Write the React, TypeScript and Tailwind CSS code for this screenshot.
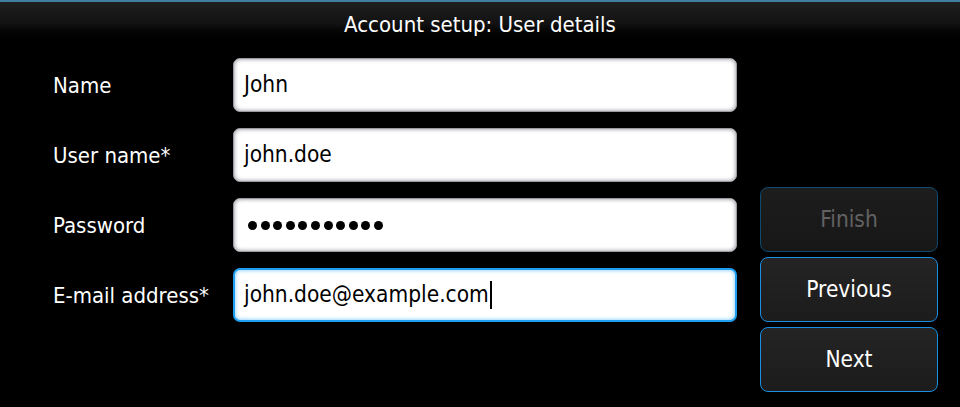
import React from "react";

const font = { fontFamily: '"DejaVu Sans Condensed", "DejaVu Sans", sans-serif' };

const fields = [
  { label: "Name", value: "John" },
  { label: "User name*", value: "john.doe" },
  { label: "Password", value: "", password: true },
  { label: "E-mail address*", value: "john.doe@example.com", focused: true },
];

const Field = ({ label, value, password, focused }: { label: string; value: string; password?: boolean; focused?: boolean }) => (
  <div className="flex items-center h-[54px]">
    <span className="w-[180px] text-white text-[22px]">{label}</span>
    <div
      className={
        focused
          ? "w-[504px] h-[54px] rounded-[7px] bg-white border-2 border-[#1e9ef0] shadow-[inset_0_0_4px_#6cc4ff] flex items-center pl-[9px]"
          : "w-[504px] h-[54px] rounded-[7px] bg-white border border-[#9c9aa0] shadow-[inset_0_0_4px_#8a8690] flex items-center pl-[10px]"
      }
    >
      {password ? (
        <div className="flex gap-[3.6px] pl-[4px]">
          {Array.from({ length: 11 }).map((_, i) => (
            <span key={i} className="w-[9px] h-[9px] rounded-full bg-black" />
          ))}
        </div>
      ) : (
        <>
          <span className="text-black text-[22.5px]">{value}</span>
          {focused && <span className="w-[2px] h-[28px] bg-black ml-[1px]" />}
        </>
      )}
    </div>
  </div>
);

const Button = ({ children, disabled }: { children: React.ReactNode; disabled?: boolean }) => (
  <button
    className={
      disabled
        ? "h-[65px] w-[178px] rounded-[8px] border border-[#0c4a73] bg-gradient-to-b from-[#1e1d1d] to-[#181717] text-[#626262] text-[22.5px]"
        : "h-[65px] w-[178px] rounded-[8px] border border-[#1a8fe3] bg-gradient-to-b from-[#252424] to-[#1d1c1c] text-white text-[22.5px]"
    }
  >
    {children}
  </button>
);

export default function App() {
  return (
    <div className="w-[960px] h-[407px] bg-black flex flex-col overflow-hidden" style={font}>
      <header className="h-[45px] border-t-2 border-[#3f7fa0] bg-gradient-to-b from-[#1f1f1f] via-[#121212] to-black flex items-center justify-center pt-[2px]">
        <h1 className="text-white text-[22px]">Account setup: User details</h1>
      </header>
      <div className="flex pl-[53px]">
        <div className="flex flex-col gap-[16px] pt-[13px]">
          {fields.map((f) => (
            <Field key={f.label} {...f} />
          ))}
        </div>
        <div className="flex flex-col gap-[5px] pt-[142px] ml-[23px]">
          <Button disabled>Finish</Button>
          <Button>Previous</Button>
          <Button>Next</Button>
        </div>
      </div>
    </div>
  );
}
